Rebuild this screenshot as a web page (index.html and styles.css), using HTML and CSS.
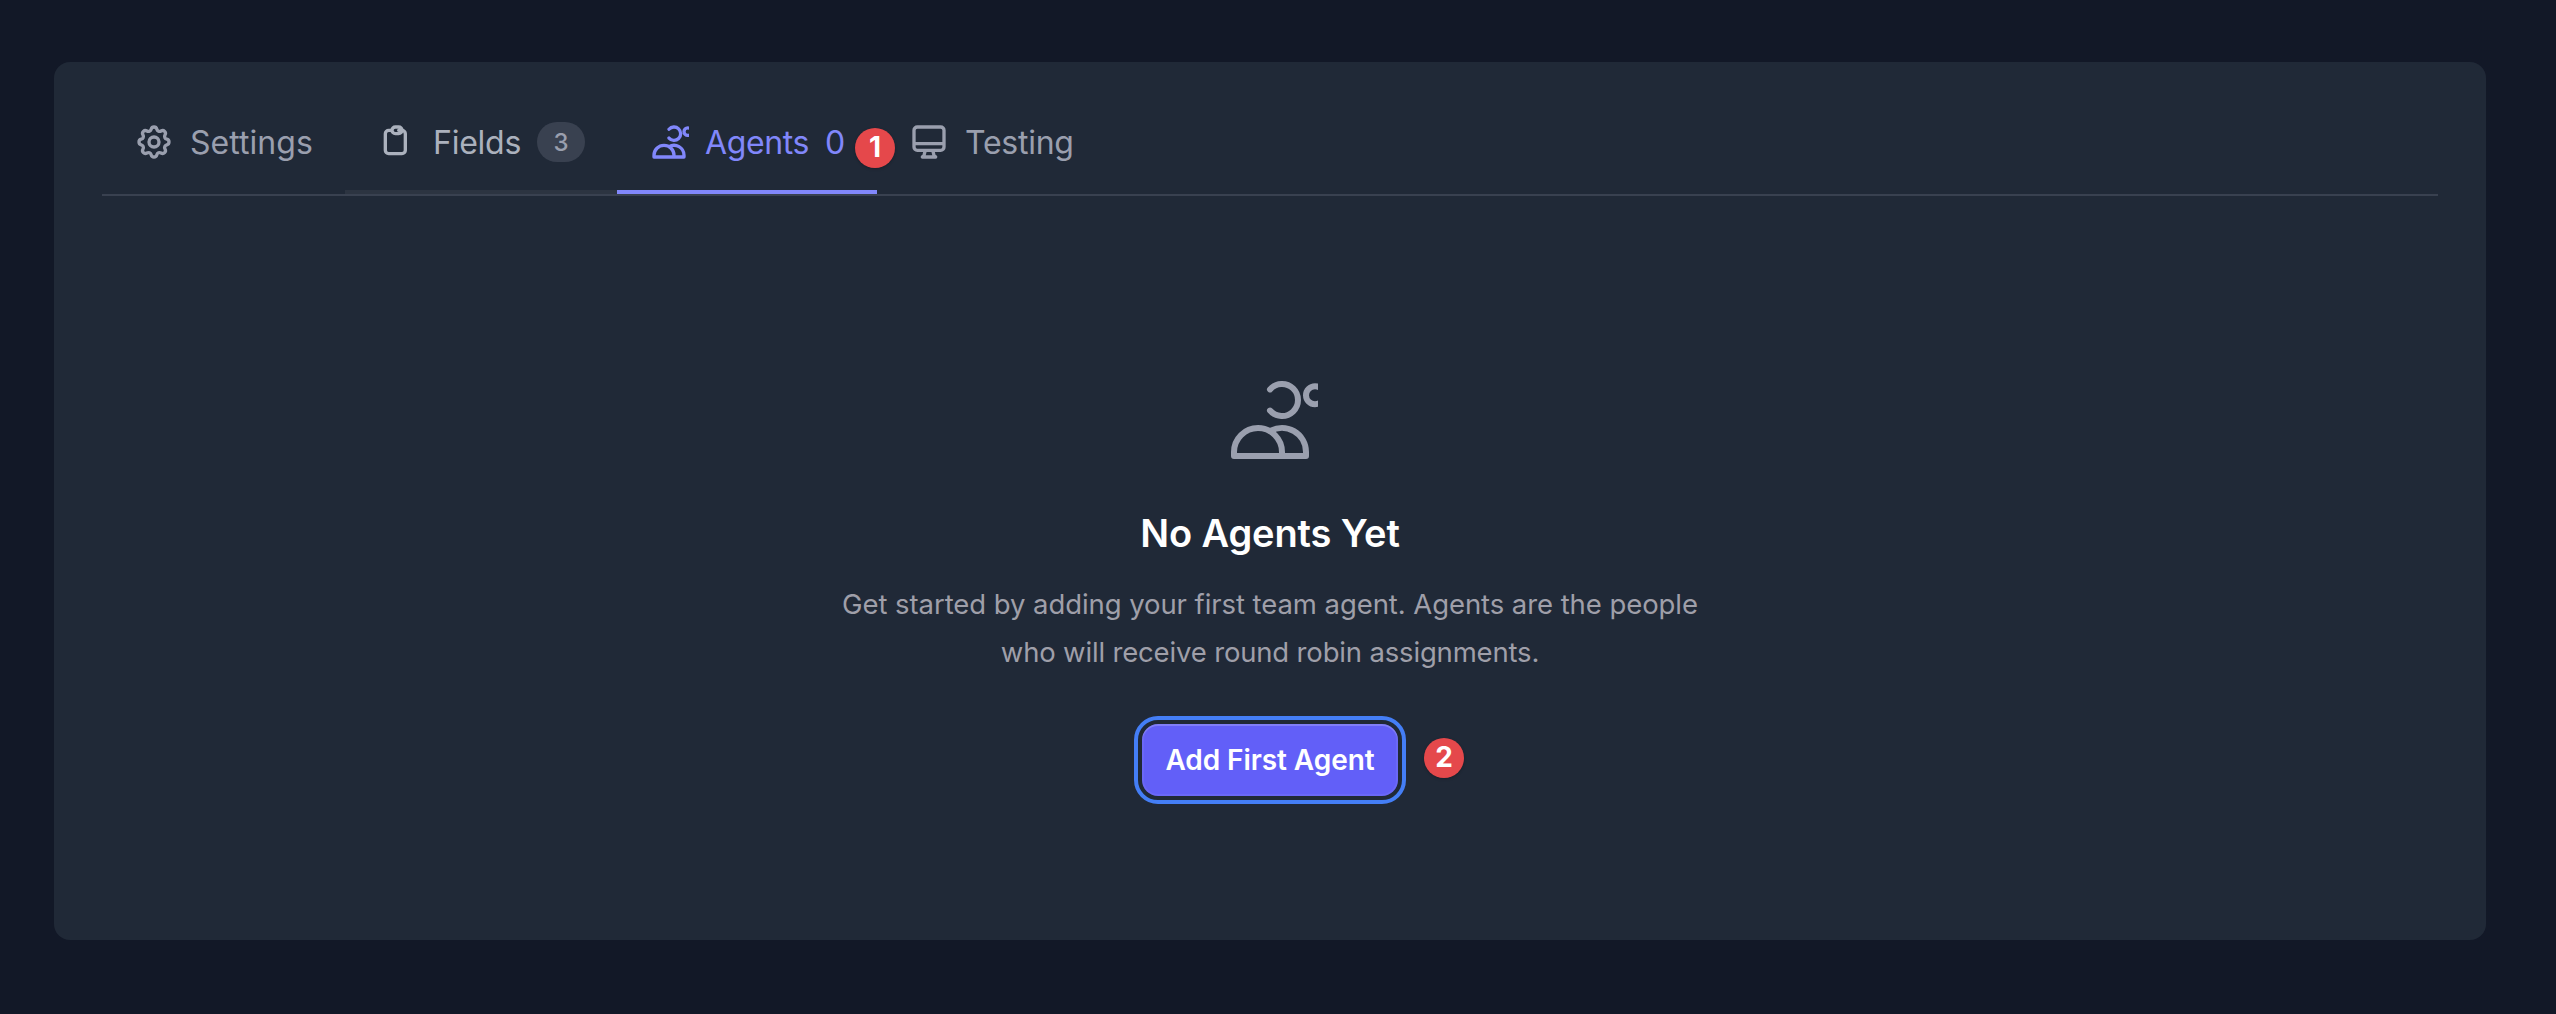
FILE: index.html
```html
<!DOCTYPE html>
<html lang="en">
<head>
<meta charset="utf-8">
<title>Agents</title>
<link rel="stylesheet" href="styles.css">
</head>
<body>
<main class="card">
  <nav class="tabs">
    <a class="tab tab-settings">
      <svg class="icon" viewBox="0 0 24 24"><path d="M10.325 4.317c.426-1.756 2.924-1.756 3.35 0a1.724 1.724 0 002.573 1.066c1.543-.94 3.31.826 2.37 2.37a1.724 1.724 0 001.065 2.572c1.756.426 1.756 2.924 0 3.35a1.724 1.724 0 00-1.066 2.573c.94 1.543-.826 3.31-2.37 2.37a1.724 1.724 0 00-2.572 1.065c-.426 1.756-2.924 1.756-3.35 0a1.724 1.724 0 00-2.573-1.066c-1.543.94-3.31-.826-2.37-2.37a1.724 1.724 0 00-1.065-2.572c-1.756-.426-1.756-2.924 0-3.35a1.724 1.724 0 001.066-2.573c-.94-1.543.826-3.31 2.37-2.37.996.608 2.296.07 2.572-1.065z"/><path d="M15 12a3 3 0 11-6 0 3 3 0 016 0z"/></svg>
      <span class="label">Settings</span>
    </a>
    <a class="tab tab-fields">
      <svg class="icon" viewBox="0 0 24 24"><path d="M9 5H7a2 2 0 00-2 2v10a2 2 0 002 2h8a2 2 0 002-2V7a2 2 0 00-2-2h-2M9 5a2 2 0 002 2h2a2 2 0 002-2M9 5a2 2 0 012-2h2a2 2 0 012 2"/></svg>
      <span class="label">Fields</span>
      <span class="count">3</span>
    </a>
    <a class="tab tab-agents">
      <svg class="icon" viewBox="0 0 24 24"><path d="M12 4.354a4 4 0 110 5.292M15 21H3v-1a6 6 0 0112 0v1zm0 0h6v-1a6 6 0 00-9-5.197m13.5-9a2.25 2.25 0 11-4.5 0 2.25 2.25 0 014.5 0z"/></svg>
      <span class="label">Agents</span>
      <span class="zero">0</span>
      <span class="marker marker-one">1</span>
    </a>
    <a class="tab tab-testing">
      <svg class="icon" viewBox="0 0 24 24"><path d="M9.75 17L9 20l-1 1h8l-1-1-.75-3M3 13h18M5 17h14a2 2 0 002-2V5a2 2 0 00-2-2H5a2 2 0 00-2 2v10a2 2 0 002 2z"/></svg>
      <span class="label">Testing</span>
    </a>
  </nav>
  <section class="empty">
    <svg class="empty-icon" viewBox="0 0 24 24"><path d="M12 4.354a4 4 0 110 5.292M15 21H3v-1a6 6 0 0112 0v1zm0 0h6v-1a6 6 0 00-9-5.197m13.5-9a2.25 2.25 0 11-4.5 0 2.25 2.25 0 014.5 0z"/></svg>
    <h1 class="title">No Agents Yet</h1>
    <p class="text">Get started by adding your first team agent. Agents are the people<br><span class="text-end">who will receive round robin assignments.</span></p>
    <div class="action">
      <button class="button">Add First Agent</button>
      <span class="marker marker-two">2</span>
    </div>
  </section>
</main>
</body>
</html>
```
FILE: styles.css
```css
* { box-sizing: border-box; }
body {
  margin: 0;
  padding: 62px 70px 75px 54px;
  min-height: 1014px;
  background: #121827;
  font-family: Inter, "Liberation Sans", sans-serif;
  color: #9a9fae;
}
.card {
  height: 878px;
  padding: 28px 48px 0;
  border-radius: 16px;
  background: #202937;
}
.tabs {
  display: flex;
  height: 106px;
  border-bottom: 2px solid #394150;
}
.tab {
  position: relative;
  display: flex;
  align-items: center;
  gap: 16px;
  height: 104px;
  padding: 4px 32px 0;
  border-bottom: 4px solid transparent;
  font-size: 32px;
  line-height: 48px;
}
.icon {
  width: 40px;
  height: 40px;
  flex: none;
  fill: none;
  stroke: currentColor;
  stroke-width: 2;
  stroke-linecap: round;
  stroke-linejoin: round;
}
.label {
  position: relative;
  top: 1px;
  white-space: nowrap;
  letter-spacing: -.25px;
}
.tab-settings { width: 243px; }
.tab-settings .label { letter-spacing: .05px; }
.tab-fields { width: 272px; border-color: #2c3441; color: #abb1bd; }
.tab-fields .label { width: 88px; }
.tab-agents { width: 260px; border-color: #8187fb; color: #8187fb; }
.tab-agents .label { width: 104px; letter-spacing: -.38px; }
.zero { position: relative; top: 1px; }
.count {
  width: 48px;
  height: 40px;
  border-radius: 20px;
  background: #394150;
  color: #9a9fae;
  font-size: 24px;
  font-weight: 500;
  line-height: 41px;
  text-align: center;
}
.marker {
  position: absolute;
  width: 40px;
  height: 40px;
  border-radius: 50%;
  background: #e5484b;
  box-shadow: 0 1px 3px rgba(0, 0, 0, .25);
  color: #fff;
  font-size: 28px;
  font-weight: 700;
  line-height: 39px;
  text-align: center;
}
.marker-one { left: 238px; top: 38px; z-index: 1; }
.empty {
  display: flex;
  flex-direction: column;
  align-items: center;
  padding-top: 176px;
}
.empty-icon {
  width: 96px;
  height: 96px;
  fill: none;
  stroke: currentColor;
  stroke-width: 1.5;
  stroke-linecap: round;
  stroke-linejoin: round;
}
.title {
  margin: 40px 0 0;
  color: #fff;
  font-size: 38px;
  font-weight: 600;
  line-height: 50px;
  letter-spacing: -.1px;
}
.text {
  margin: 22px 0 0;
  color: #9f9fa9;
  font-size: 27.5px;
  line-height: 48px;
  letter-spacing: -.07px;
  text-align: center;
  white-space: nowrap;
}
.text-end { letter-spacing: -.17px; }
.action { position: relative; margin-top: 48px; }
.button {
  display: block;
  width: 256px;
  height: 72px;
  padding: 0;
  border: 0;
  border-radius: 16px;
  background: #625ff8;
  box-shadow: inset 0 2px 0 rgba(255, 255, 255, .15), inset 0 0 0 2px rgba(255, 255, 255, .06);
  outline: 4px solid #447ef6;
  outline-offset: 4px;
  color: #fff;
  font: 600 28px/73px Inter, "Liberation Sans", sans-serif;
  letter-spacing: -.08px;
  white-space: nowrap;
}
.marker-two { left: 282px; top: 14px; }
```
